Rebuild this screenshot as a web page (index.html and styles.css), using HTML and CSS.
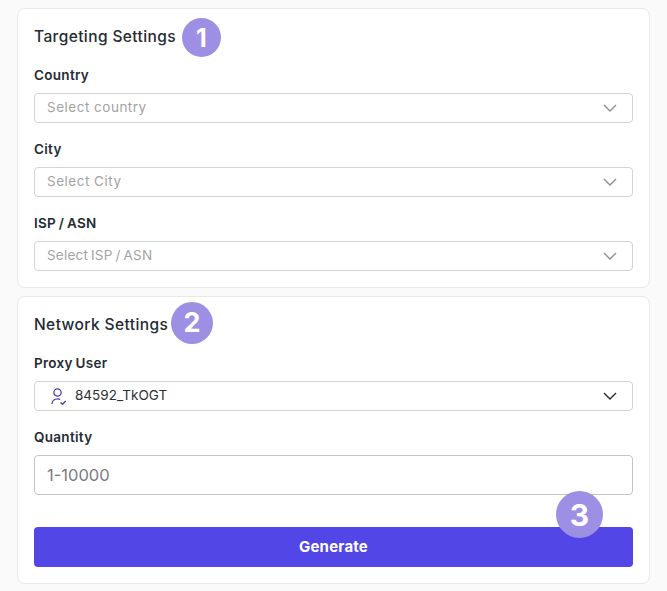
FILE: index.html
```html
<!DOCTYPE html>
<html>
    <head>
        <title>Proxy Generator</title>
        <meta charset=utf8>
        <link rel="stylesheet" href="styles.css">
    </head>
    <body>
        <div class="card">
            <h3 class="card-title">Targeting Settings<span class="step step-one">1</span></h3>
            <div class="field">
                <div class="field-label">Country</div>
                <div class="select">
                    <span class="placeholder">Select country</span>
                    <svg class="chevron" width="14" height="8" viewBox="0 0 14 8"><path d="M1 1l6 6 6-6" /></svg>
                </div>
            </div>
            <div class="field">
                <div class="field-label">City</div>
                <div class="select">
                    <span class="placeholder">Select City</span>
                    <svg class="chevron" width="14" height="8" viewBox="0 0 14 8"><path d="M1 1l6 6 6-6" /></svg>
                </div>
            </div>
            <div class="field">
                <div class="field-label">ISP / ASN</div>
                <div class="select">
                    <span class="placeholder isp">Select ISP / ASN</span>
                    <svg class="chevron" width="14" height="8" viewBox="0 0 14 8"><path d="M1 1l6 6 6-6" /></svg>
                </div>
            </div>
        </div>
        <div class="card">
            <h3 class="card-title">Network Settings<span class="step step-two">2</span></h3>
            <div class="field">
                <div class="field-label">Proxy User</div>
                <div class="select select-user">
                    <svg class="user-icon" width="16" height="18" viewBox="0 0 16 18"><circle cx="6.5" cy="5.5" r="3.6" /><path d="M1 17c0-3.2 2.4-5.2 5.5-5.2 1 0 1.9.2 2.7.6" /><path d="M9.5 15.5l2 1.8 3.2-3.3" /></svg>
                    <span class="value">84592_TkOGT</span>
                    <svg class="chevron chevron-dark" width="14" height="8" viewBox="0 0 14 8"><path d="M1 1l6 6 6-6" /></svg>
                </div>
            </div>
            <div class="field">
                <div class="field-label">Quantity</div>
                <input class="quantity" placeholder="1-10000">
            </div>
            <div class="actions">
                <button class="generate">Generate</button>
                <span class="step step-three">3</span>
            </div>
        </div>
    </body>
</html>
```

FILE: styles.css
```css
html {
    font-family: Inter, "Liberation Sans", sans-serif;
}
body {
    margin: 0;
    padding: 8px 17px 7px;
    background-color: #fafafa;
}
.card {
    background-color: white;
    border: 1px solid #e9e9e9;
    border-radius: 8px;
    padding: 16px;
    margin-bottom: 8px;
}
.card:last-child {
    margin-bottom: 0;
}
.card-title {
    position: relative;
    margin: 0 0 16px;
    font-size: 15.5px;
    font-weight: 450;
    line-height: 24px;
    color: #252a33;
    letter-spacing: 0.4px;
}
.field {
    margin-top: 16px;
}
.card-title + .field {
    margin-top: 0;
}
.field-label {
    font-size: 13.5px;
    font-weight: 600;
    line-height: 20px;
    color: #252a33;
    margin-bottom: 8px;
    letter-spacing: 0.3px;
    word-spacing: -1px;
}
.select {
    display: flex;
    align-items: center;
    justify-content: space-between;
    box-sizing: border-box;
    height: 30px;
    padding: 0 15px 0 12px;
    border: 1px solid #d4d4d4;
    border-radius: 4px;
    font-size: 13.5px;
    letter-spacing: 0.5px;
}
.select-user {
    justify-content: flex-start;
    padding-left: 16px;
}
.placeholder {
    color: #a3a3a3;
    margin-bottom: 2px;
}
.isp {
    letter-spacing: 0.2px;
    word-spacing: -1px;
}
.value {
    margin-left: 8px;
    margin-bottom: 2px;
    color: #2b2f36;
    letter-spacing: 0;
}
.chevron {
    fill: none;
    stroke: #8f8f8f;
    stroke-width: 1.4;
}
.chevron-dark {
    margin-left: auto;
    stroke: #26282c;
}
.user-icon {
    fill: none;
    stroke: #4c3fa8;
    stroke-width: 1.3;
}
.quantity {
    display: block;
    box-sizing: border-box;
    width: 100%;
    height: 40px;
    padding: 0 12px;
    border: 1px solid #c4c4c4;
    border-radius: 4px;
    outline: none;
    font-family: inherit;
    font-size: 16.5px;
}
.quantity::placeholder {
    color: #787c82;
}
.actions {
    position: relative;
    margin-top: 32px;
}
.generate {
    display: block;
    width: 100%;
    height: 40px;
    padding: 0 0 2px;
    border: 0;
    border-radius: 4px;
    background-color: #5346e6;
    color: white;
    font-family: inherit;
    font-size: 15px;
    font-weight: 700;
    letter-spacing: 0.2px;
}
.step {
    position: absolute;
    display: flex;
    align-items: center;
    justify-content: center;
    border-radius: 50%;
    background-color: #9d90e4;
    color: white;
    font-weight: 700;
    letter-spacing: 0;
}
.step-one {
    left: 148px;
    top: -7px;
    width: 39px;
    height: 39px;
    font-size: 25px;
}
.step-two {
    left: 137px;
    top: -11px;
    width: 42px;
    height: 42px;
    font-size: 27px;
}
.step-three {
    left: 522px;
    top: -36px;
    width: 47px;
    height: 47px;
    font-size: 30px;
}
```
